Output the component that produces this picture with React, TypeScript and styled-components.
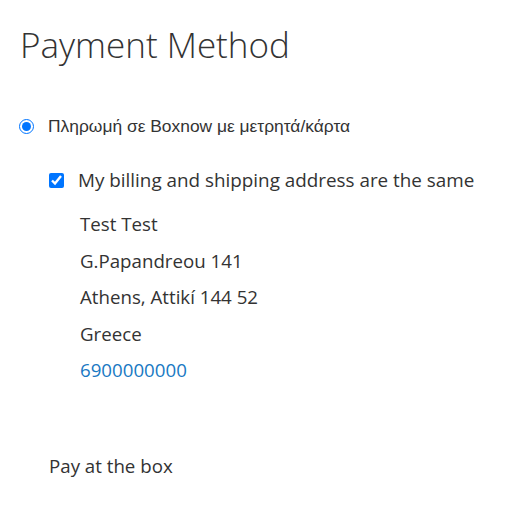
import React from "react";
import styled, { createGlobalStyle } from "styled-components";

const Global = createGlobalStyle`
  html, body { margin: 0; padding: 0; background: #fff; }
  body { font-family: "Open Sans", sans-serif; color: #333; }
`;

const Page = styled.div`
  padding: 24px 20px 0 19px;
`;

const Title = styled.h2`
  margin: 0 0 50px 1px;
  font-family: "Open Sans", sans-serif;
  font-weight: 300;
  font-size: 35px;
  line-height: 42px;
  color: #333;
`;

const MethodRow = styled.label`
  display: flex;
  align-items: center;
  gap: 14px;
  font-family: "Liberation Sans", Arial, sans-serif;
  font-size: 17.4px;
  line-height: 20px;
  color: #333;
`;

const Radio = styled.input`
  margin: 0;
  width: 15px;
  height: 15px;
  accent-color: #0075ff;
`;

const Content = styled.div`
  padding: 32px 0 0 30px;
`;

const CheckRow = styled.label`
  display: flex;
  align-items: center;
  gap: 14px;
  font-size: 18.85px;
  line-height: 24px;
  color: #333;
`;

const Check = styled.input`
  margin: 0;
  width: 15px;
  height: 15px;
  accent-color: #0075ff;
`;

const Address = styled.div`
  padding: 14px 0 0 31px;
  font-size: 18.7px;
  line-height: 36.5px;
  color: #333;
`;

const Phone = styled.a`
  color: #1979c3;
  text-decoration: none;
`;

const Note = styled.p`
  margin: 65px 0 0 0;
  font-size: 18.7px;
  line-height: 24px;
  color: #333;
`;

export default function App() {
  return (
    <>
      <Global />
      <Page>
        <Title>Payment Method</Title>
        <MethodRow>
          <Radio type="radio" name="pm" defaultChecked />
          Πληρωμή σε Boxnow με μετρητά/κάρτα
        </MethodRow>
        <Content>
          <CheckRow>
            <Check type="checkbox" defaultChecked />
            My billing and shipping address are the same
          </CheckRow>
          <Address>
            <div>Test Test</div>
            <div>G.Papandreou 141</div>
            <div>Athens, Attikí 144 52</div>
            <div>Greece</div>
            <div>
              <Phone href="#">6900000000</Phone>
            </div>
          </Address>
          <Note>Pay at the box</Note>
        </Content>
      </Page>
    </>
  );
}
